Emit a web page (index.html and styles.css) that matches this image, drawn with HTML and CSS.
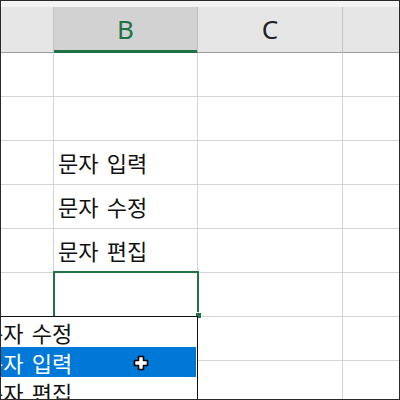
FILE: index.html
```html
<!DOCTYPE html>
<html lang="ko">
<head>
<meta charset="utf-8">
<link rel="stylesheet" href="styles.css">
</head>
<body>
<div class="frame">
  <div class="topstrip"></div>
  <div class="row header">
    <div class="cell hcell"></div>
    <div class="cell hcell selected">B</div>
    <div class="cell hcell">C</div>
    <div class="cell hcell last"></div>
  </div>
  <div class="row"><div class="cell"></div><div class="cell"></div><div class="cell"></div><div class="cell last"></div></div>
  <div class="row"><div class="cell"></div><div class="cell"></div><div class="cell"></div><div class="cell last"></div></div>
  <div class="row"><div class="cell"></div><div class="cell text">문자 입력</div><div class="cell"></div><div class="cell last"></div></div>
  <div class="row"><div class="cell"></div><div class="cell text">문자 수정</div><div class="cell"></div><div class="cell last"></div></div>
  <div class="row"><div class="cell"></div><div class="cell text">문자 편집</div><div class="cell"></div><div class="cell last"></div></div>
  <div class="row"><div class="cell"></div><div class="cell"></div><div class="cell"></div><div class="cell last"></div></div>
  <div class="row"><div class="cell"></div><div class="cell"></div><div class="cell"></div><div class="cell last"></div></div>
  <div class="row"><div class="cell"></div><div class="cell"></div><div class="cell"></div><div class="cell last"></div></div>

  <div class="active-cell"></div>
  <div class="fill-handle"></div>

  <ul class="dropdown">
    <li class="item">문자 수정</li>
    <li class="item hl">문자 입력</li>
    <li class="item">문자 편집</li>
  </ul>

  <svg class="cursor" width="16" height="16" viewBox="0 0 16 16">
    <path d="M5.5 1.5 H10.5 V5.5 H14.5 V10.5 H10.5 V14.5 H5.5 V10.5 H1.5 V5.5 H5.5 Z" fill="#fff" stroke="#000" stroke-width="1.6" stroke-linejoin="round"/>
  </svg>
</div>
</body>
</html>
```

FILE: styles.css
```css
html, body {
  margin: 0;
  padding: 0;
  background: #fff;
}

.frame {
  position: relative;
  width: 400px;
  height: 400px;
  box-sizing: border-box;
  border: 1px solid #2a2a2a;
  overflow: hidden;
  background: #fff;
}

.topstrip {
  height: 6px;
  background: #f4f4f4;
}

.row {
  display: grid;
  grid-template-columns: 53px 144px 145px 1fr;
  height: 44px;
}

.cell {
  box-sizing: border-box;
  border-right: 1px solid #d4d4d4;
  border-bottom: 1px solid #d4d4d4;
}

.cell.last {
  border-right: none;
}

.header {
  height: 46px;
}

.hcell {
  background: #e6e6e6;
  border-right: 1px solid #c4c4c4;
  border-bottom: 1px solid #9e9e9e;
  display: flex;
  align-items: center;
  justify-content: center;
  font-family: "Noto Sans", "Open Sans", sans-serif;
  font-size: 26px;
  color: #222;
  padding-bottom: 2px;
}

.hcell.selected {
  background: #d2d2d2;
  color: #217346;
  border-bottom: 1px solid #217346;
  box-shadow: inset 0 -2px 0 #217346;
  border-right-color: #bdbdbd;
}

.text {
  display: flex;
  align-items: center;
  padding-left: 4px;
  font-family: "Noto Sans CJK KR", "Noto Sans", sans-serif;
  font-size: 22px;
  word-spacing: 2px;
  color: #111;
  padding-bottom: 1px;
}

.active-cell {
  position: absolute;
  left: 52px;
  top: 270px;
  width: 146px;
  height: 47px;
  box-sizing: border-box;
  border: 2px solid #217346;
}

.fill-handle {
  position: absolute;
  left: 194px;
  top: 311px;
  width: 7px;
  height: 7px;
  box-sizing: border-box;
  background: #217346;
  border: 1px solid #fff;
}

.dropdown {
  position: absolute;
  left: -30px;
  top: 315px;
  width: 227px;
  height: 110px;
  margin: 0;
  padding: 0 1px 0 0;
  list-style: none;
  box-sizing: border-box;
  border: 1px solid #111;
  background: #fff;
}

.item {
  height: 30px;
  display: flex;
  align-items: center;
  padding-left: 11px;
  font-family: "Noto Sans CJK KR", "Noto Sans", sans-serif;
  font-size: 22px;
  word-spacing: 2px;
  color: #111;
  white-space: nowrap;
}

.item.hl {
  background: #0078d7;
  color: #fff;
}

.cursor {
  position: absolute;
  left: 132px;
  top: 354px;
}
```
